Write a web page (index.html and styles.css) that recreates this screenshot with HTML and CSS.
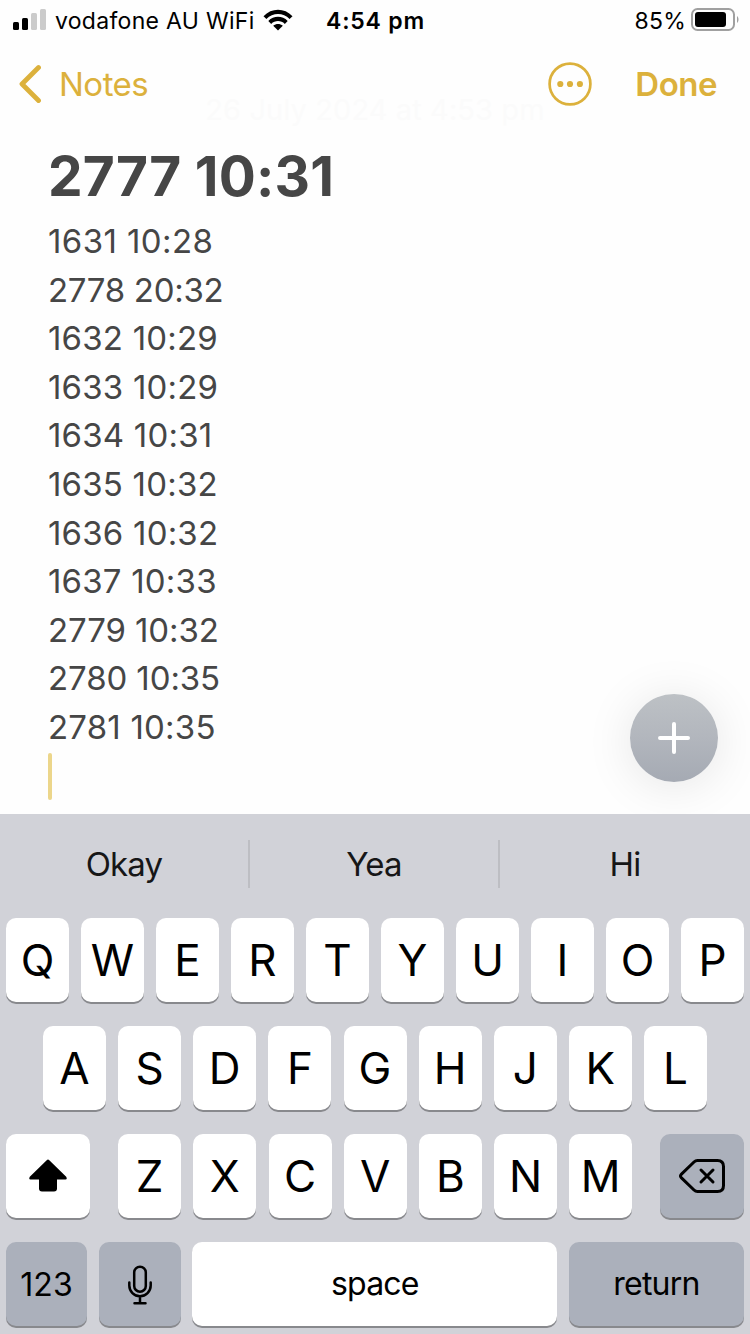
FILE: index.html
```html
<!DOCTYPE html>
<html lang="en">
<head>
    <meta charset="UTF-8">
    <meta name="viewport" content="width=device-width, initial-scale=1.0">
    <title>Notes</title>
    <link rel="stylesheet" href="styles.css">
</head>
<body>
    <div class="screen">
        <!-- Status Bar -->
        <div class="status-bar">
            <div class="carrier">
                <svg class="signal" width="34" height="22" viewBox="0 0 34 22">
                    <rect x="1" y="13" width="6" height="8" rx="1.5"/>
                    <rect x="10" y="9" width="6" height="12" rx="1.5"/>
                    <rect class="off" x="19" y="4" width="6" height="17" rx="1.5"/>
                    <rect class="off" x="28" y="0" width="6" height="21" rx="1.5"/>
                </svg>
                <span class="carrier-name">vodafone AU WiFi</span>
                <svg class="wifi" width="30" height="22" viewBox="0 0 30 22">
                    <path d="M0.5 7.2C8.5-1.4 21.5-1.4 29.5 7.2L26.6 10.1C20.2 3.4 9.8 3.4 3.4 10.1Z"/>
                    <path d="M5.3 12C10.7 6.4 19.3 6.4 24.7 12L21.8 14.9C18 11.1 12 11.1 8.2 14.9Z"/>
                    <path d="M10.2 16.8C13 14.3 17 14.3 19.8 16.8L15 21.6Z"/>
                </svg>
            </div>
            <div class="clock">4:54 pm</div>
            <div class="battery">
                <span class="battery-level">85%</span>
                <svg width="48" height="24" viewBox="0 0 48 24">
                    <rect x="1" y="1" width="42" height="21" rx="5.5" fill="none" stroke="#a0a0a0" stroke-width="2"/>
                    <rect x="4" y="4" width="31" height="15" rx="3"/>
                    <path d="M46 8C48 9.5 48 13.5 46 15Z" fill="#a0a0a0"/>
                </svg>
            </div>
        </div>

        <!-- Navigation -->
        <header class="nav">
            <a class="back">
                <svg width="24" height="40" viewBox="0 0 24 40" fill="none" stroke="currentColor" stroke-width="4.8" stroke-linecap="round" stroke-linejoin="round">
                    <path d="M21.5 3.5L5 20L21.5 36.5"/>
                </svg>
                <span class="back-label">Notes</span>
            </a>
            <svg class="more" width="44" height="44" viewBox="0 0 44 44">
                <circle cx="22" cy="22" r="20.4" fill="none" stroke="currentColor" stroke-width="2.7"/>
                <circle cx="12.3" cy="22" r="3.1"/>
                <circle cx="22" cy="22" r="3.1"/>
                <circle cx="31.9" cy="22" r="3.1"/>
            </svg>
            <span class="done">Done</span>
            <div class="note-date">26 July 2024 at 4:53 pm</div>
        </header>

        <!-- Note -->
        <main class="note">
            <h1>2777 10:31</h1>
            <p class="loose">1631 10:28</p>
            <p class="tight">2778 20:32</p>
            <p>1632 10:29</p>
            <p>1633 10:29</p>
            <p>1634 10:31</p>
            <p>1635 10:32</p>
            <p>1636 10:32</p>
            <p>1637 10:33</p>
            <p class="snug">2779 10:32</p>
            <p class="snug">2780 10:35</p>
            <p>2781 10:35</p>
            <div class="caret"></div>
            <button class="add-button">
                <svg width="32" height="32" viewBox="0 0 32 32" stroke="white" stroke-width="4" stroke-linecap="round">
                    <path d="M16 2V30M2 16H30"/>
                </svg>
            </button>
        </main>

        <!-- Keyboard -->
        <div class="keyboard">
            <div class="suggestions">
                <span>Okay</span>
                <span>Yea</span>
                <span>Hi</span>
            </div>
            <div class="row">
                <button class="key">Q</button>
                <button class="key">W</button>
                <button class="key">E</button>
                <button class="key">R</button>
                <button class="key">T</button>
                <button class="key">Y</button>
                <button class="key">U</button>
                <button class="key">I</button>
                <button class="key">O</button>
                <button class="key">P</button>
            </div>
            <div class="row row-middle">
                <button class="key">A</button>
                <button class="key">S</button>
                <button class="key">D</button>
                <button class="key">F</button>
                <button class="key">G</button>
                <button class="key">H</button>
                <button class="key">J</button>
                <button class="key">K</button>
                <button class="key">L</button>
            </div>
            <div class="row">
                <button class="key shift">
                    <svg width="38" height="34" viewBox="0 0 38 34">
                        <path d="M17.7 1.2Q19 0 20.3 1.2L37.2 17.8Q38.6 20.4 36.5 20.4H28V29.5Q28 32.5 25 32.5H13Q10 32.5 10 29.5V20.4H1.5Q-0.6 20.4 0.8 17.8Z"/>
                    </svg>
                </button>
                <div class="letters">
                    <button class="key">Z</button>
                    <button class="key">X</button>
                    <button class="key">C</button>
                    <button class="key">V</button>
                    <button class="key">B</button>
                    <button class="key">N</button>
                    <button class="key">M</button>
                </div>
                <button class="key gray delete">
                    <svg width="46" height="34" viewBox="0 0 46 34" fill="none" stroke="currentColor" stroke-width="3" stroke-linecap="round" stroke-linejoin="round">
                        <path d="M18.5 1.5H38.5Q44.5 1.5 44.5 7.5V26.5Q44.5 32.5 38.5 32.5H18.5Q16.5 32.5 15 31L2.2 18.6Q0.8 17 2.2 15.4L15 3Q16.5 1.5 18.5 1.5Z"/>
                        <path d="M22 11L34 23M34 11L22 23"/>
                    </svg>
                </button>
            </div>
            <div class="row">
                <button class="key gray numbers">123</button>
                <button class="key gray mic">
                    <svg width="24" height="40" viewBox="0 0 24 40" fill="none" stroke="currentColor" stroke-width="2.5" stroke-linecap="round">
                        <rect x="6.2" y="1.7" width="11.6" height="25" rx="5.8"/>
                        <path d="M1.3 17.5V20.5A10.7 10.7 0 0 0 22.7 20.5V17.5M12 31.5V38M6.5 38.2H17.5"/>
                    </svg>
                </button>
                <button class="key space">space</button>
                <button class="key gray return">return</button>
            </div>
        </div>
    </div>
</body>
</html>
```
FILE: styles.css
```css
* {
    margin: 0;
    padding: 0;
    box-sizing: border-box;
}

body {
    background-color: #fefefe;
    font-family: Inter, "Liberation Sans", sans-serif;
}

svg {
    display: block;
    flex-shrink: 0;
}

.screen {
    width: 750px;
    height: 1334px;
    display: flex;
    flex-direction: column;
    overflow: hidden;
}

/* Status Bar */
.status-bar {
    height: 40px;
    padding: 0 11px 0 12px;
    display: grid;
    grid-template-columns: 1fr auto 1fr;
    align-items: center;
    font-size: 23px;
    color: #000;
}

.carrier,
.battery {
    display: flex;
    align-items: center;
}

.signal .off {
    fill: #cbcbcb;
}

.carrier-name,
.clock,
.battery-level {
    line-height: 38px;
    padding-top: 2px;
}

.carrier-name {
    margin-left: 9px;
    letter-spacing: 0.3px;
    white-space: nowrap;
}

.wifi {
    margin-left: 8px;
}

.clock {
    font-weight: 600;
    letter-spacing: 0.8px;
}

.battery {
    justify-content: flex-end;
    gap: 5px;
}

.battery-level {
    letter-spacing: 0.2px;
}

/* Navigation */
.nav {
    position: relative;
    height: 88px;
    padding: 0 33px 0 17px;
    display: flex;
    align-items: center;
    color: #dcb13c;
    font-size: 33px;
}

.back {
    display: flex;
    align-items: center;
    gap: 18px;
    flex: 1;
    letter-spacing: -0.5px;
}

.more {
    margin-right: 43px;
    fill: currentColor;
}

.done {
    font-weight: 600;
    letter-spacing: -0.5px;
}

.note-date {
    position: absolute;
    top: 52px;
    left: 0;
    width: 100%;
    text-align: center;
    font-size: 29px;
    letter-spacing: 0.1px;
    color: #fbfbfb;
}

/* Note */
.note {
    position: relative;
    flex: 1;
    padding: 9px 48px 0;
    color: #464646;
}

.note h1 {
    font-size: 55px;
    line-height: 78px;
    margin-bottom: 2px;
    font-weight: 700;
    letter-spacing: 0.2px;
}

.note p {
    font-size: 33px;
    line-height: 48.6px;
    letter-spacing: 0.2px;
}

.note .loose {
    letter-spacing: 0.4px;
}

.note .snug {
    letter-spacing: -0.1px;
}

.note .tight {
    letter-spacing: -0.3px;
}

.caret {
    width: 4px;
    height: 47px;
    margin-top: 1.4px;
    border-radius: 2px;
    background-color: #ecd68b;
}

.add-button {
    position: absolute;
    right: 32px;
    bottom: 32px;
    width: 88px;
    height: 88px;
    border: none;
    border-radius: 50%;
    background: linear-gradient(#bdc1c5, #b2b6bd 50%, #a5aab3);
    box-shadow: 0 4px 48px rgba(0, 0, 0, 0.1);
    display: flex;
    align-items: center;
    justify-content: center;
}

/* Keyboard */
.keyboard {
    position: relative;
    height: 520px;
    padding: 0 6px;
    background-color: #d1d2d8;
}

.suggestions {
    height: 104px;
    margin: 0 -6px;
    display: grid;
    grid-template-columns: 248px 250px 252px;
    align-items: center;
    text-align: center;
    font-size: 33px;
    line-height: 48px;
    letter-spacing: -0.8px;
    color: #161617;
}

.suggestions span {
    margin-top: -4px;
}

.suggestions span + span {
    border-left: 2px solid #bdbec3;
}

.row {
    height: 84px;
    margin-bottom: 24px;
    display: flex;
    justify-content: space-between;
}

.row-middle {
    padding: 0 37px;
}

.letters {
    width: 514px;
    margin-left: 0.4px;
    display: flex;
    justify-content: space-between;
}

.key {
    width: 63px;
    height: 84px;
    border: none;
    border-radius: 10px;
    background-color: #fff;
    box-shadow: 0 2px 0 #88898d;
    color: #000;
    font-family: inherit;
    font-size: 44px;
    display: flex;
    align-items: center;
    justify-content: center;
}

.gray {
    background-color: #abb0bb;
}

.shift,
.delete {
    width: 84px;
}

.numbers {
    width: 81px;
    padding-top: 1px;
    font-size: 32px;
}

.mic {
    width: 82px;
    padding-top: 1px;
}

.space,
.return {
    font-size: 32px;
    letter-spacing: -0.8px;
    padding: 0 0 2px;
}

.space {
    width: 365px;
}

.return {
    width: 175px;
}
```
